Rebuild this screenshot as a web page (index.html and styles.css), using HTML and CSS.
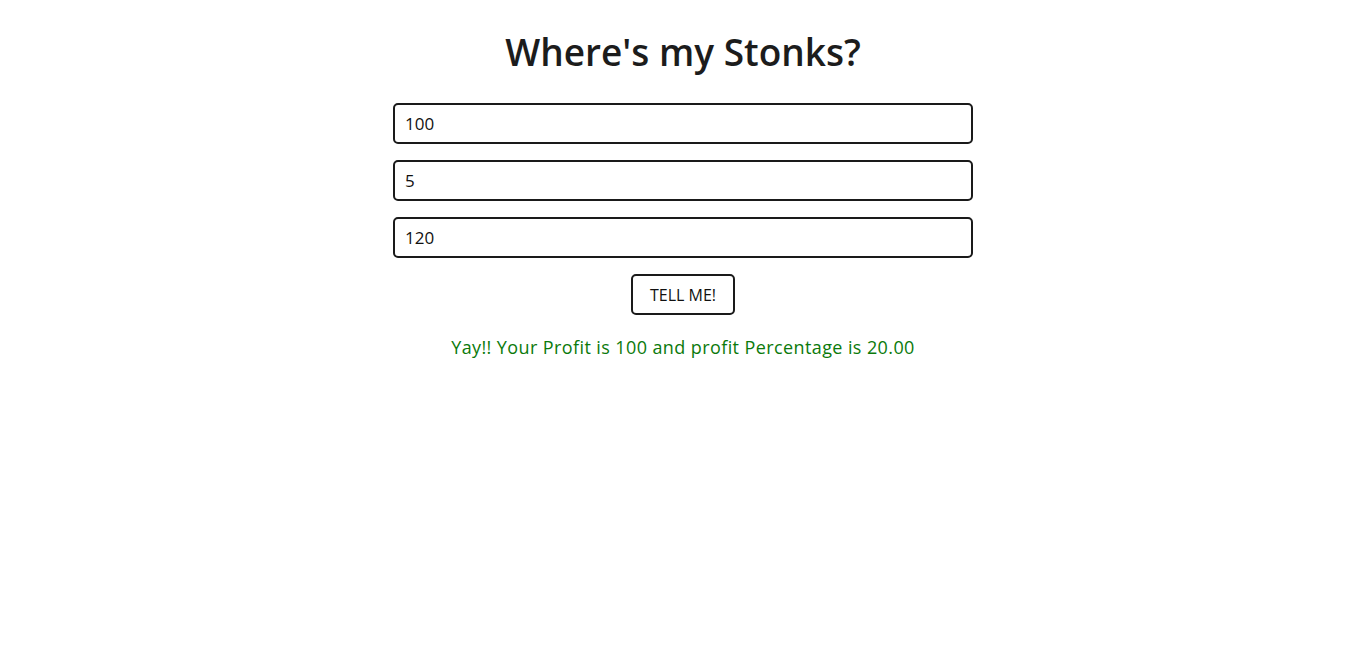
FILE: index.html
```html
<!DOCTYPE html>
<html>
<head>
<meta charset="utf-8">
<link rel="stylesheet" href="styles.css">
</head>
<body>
<main class="app">
  <h1 class="title">Where's my Stonks?</h1>
  <input class="field" type="number" value="100">
  <input class="field" type="number" value="5">
  <input class="field" type="number" value="120">
  <button class="btn">TELL ME!</button>
  <p class="result">Yay!! Your Profit is 100 and profit Percentage is 20.00</p>
</main>
</body>
</html>
```
FILE: styles.css
```css
* { box-sizing: border-box; }
body {
  margin: 0;
  background: #fff;
  font-family: "Open Sans", "Liberation Sans", sans-serif;
  color: #1a1a1a;
}
.app {
  display: flex;
  flex-direction: column;
  align-items: center;
  padding-top: 29px;
}
.title {
  margin: 0 0 28px;
  font-size: 37px;
  font-weight: 600;
  line-height: 46px;
  color: #1c1c1c;
}
.field {
  width: 580px;
  height: 41px;
  border: 2px solid #1a1a1a;
  border-radius: 5px;
  padding: 0 10px;
  margin-bottom: 16px;
  font-family: inherit;
  font-size: 17px;
  color: #111;
  -moz-appearance: textfield;
}
.field::-webkit-outer-spin-button,
.field::-webkit-inner-spin-button { -webkit-appearance: none; margin: 0; }
.btn {
  width: 104px;
  height: 41px;
  border: 2px solid #1a1a1a;
  border-radius: 5px;
  background: #fff;
  font-family: inherit;
  font-size: 16px;
  color: #111;
  padding: 0;
}
.result {
  margin: 20px 0 0;
  font-size: 18px;
  letter-spacing: 0.4px;
  color: #0b7a0b;
}
```
